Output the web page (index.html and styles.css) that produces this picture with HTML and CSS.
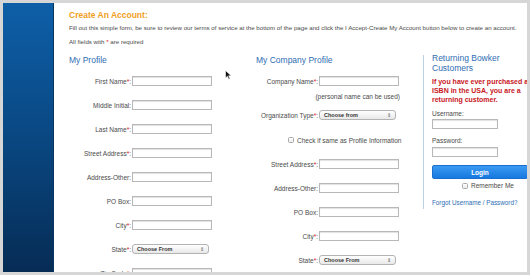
FILE: index.html
```html
<!DOCTYPE html>
<html lang="en">
<head>
    <meta charset="UTF-8">
    <meta name="viewport" content="width=device-width, initial-scale=1.0">
    <title>Create An Account</title>
    <link rel="stylesheet" href="styles.css">
</head>
<body>
    <div class="frame">
        <div class="sidebar"></div>
        <div class="main">
            <h1 class="page-title">Create An Account:</h1>
            <p class="intro">Fill out this simple form, be sure to review our terms of service at the bottom of the page and click the I Accept-Create My Account button below to create an account.</p>
            <p class="intro required-note">All fields with <span class="req">*</span> are required</p>

            <div class="columns">
                <div class="col profile">
                    <h2 class="col-title">My Profile</h2>
                    <div class="row"><label>First Name<span class="req">*</span>:</label><input type="text"></div>
                    <div class="row"><label>Middle Initial:</label><input type="text"></div>
                    <div class="row"><label>Last Name<span class="req">*</span>:</label><input type="text"></div>
                    <div class="row"><label>Street Address<span class="req">*</span>:</label><input type="text"></div>
                    <div class="row"><label>Address-Other:</label><input type="text"></div>
                    <div class="row"><label>PO Box:</label><input type="text"></div>
                    <div class="row"><label>City<span class="req">*</span>:</label><input type="text"></div>
                    <div class="row"><label>State<span class="req">*</span>:</label><span class="select">Choose From</span></div>
                    <div class="row"><label>Zip Code<span class="req">*</span>:</label><input type="text"></div>
                </div>

                <div class="col company">
                    <h2 class="col-title">My Company Profile</h2>
                    <div class="row"><label>Company Name<span class="req">*</span>:</label><input type="text"></div>
                    <p class="note">(personal name can be used)</p>
                    <div class="row"><label>Organization Type<span class="req">*</span>:</label><span class="select">Choose from</span></div>
                    <div class="row check-row"><input type="checkbox" class="check"><span>Check if same as Profile Information</span></div>
                    <div class="row"><label>Street Address<span class="req">*</span>:</label><input type="text"></div>
                    <div class="row"><label>Address-Other:</label><input type="text"></div>
                    <div class="row"><label>PO Box:</label><input type="text"></div>
                    <div class="row"><label>City<span class="req">*</span>:</label><input type="text"></div>
                    <div class="row"><label>State<span class="req">*</span>:</label><span class="select">Choose From</span></div>
                </div>

                <div class="col login">
                    <h2 class="col-title">Returning Bowker Customers</h2>
                    <p class="returning">If you have ever purchased an ISBN in the USA, you are a returning customer.</p>
                    <div class="field-label">Username:</div>
                    <input type="text" class="login-input">
                    <div class="field-label password">Password:</div>
                    <input type="password" class="login-input">
                    <button class="login-button">Login</button>
                    <div class="remember"><input type="checkbox" class="check"><span>Remember Me</span></div>
                    <a href="#" class="forgot">Forgot Username / Password?</a>
                </div>
            </div>
        </div>

        <!-- mouse pointer caught in the screenshot -->
        <svg class="cursor" width="7" height="10" viewBox="0 0 7 10">
            <path d="M0.5 0.5 L0.5 8 L2.4 6.3 L3.8 9.3 L5 8.8 L3.6 5.8 L6.2 5.8 Z" fill="#111" stroke="#fff" stroke-width="0.6"/>
        </svg>
    </div>
</body>
</html>
```
FILE: styles.css
```css
html, body {
    margin: 0;
    height: 275px;
}
body {
    background-color: #d6d6d6;
    padding: 3px;
    box-sizing: border-box;
    font-family: "Liberation Sans", Arial, sans-serif;
    color: #4a4a4a;
}
.frame {
    position: relative;
    display: flex;
    height: 269px;
    background-color: #fff;
    overflow: hidden;
}
.sidebar {
    flex: 0 0 50px;
    background: linear-gradient(#0e5fa8, #0a4a86 45%, #062c55);
    border-right: 1px solid #0a3560;
}
.main {
    flex: 1;
    min-width: 0;
    padding: 6px 0 0 15px;
}
.page-title {
    margin: 0;
    font-size: 8.5px;
    line-height: 12px;
    font-weight: bold;
    color: #f0a01e;
}
.intro {
    margin: 2px 0 0;
    font-size: 6.15px;
    line-height: 10px;
    white-space: nowrap;
}
.required-note {
    margin-top: 4px;
}
.req {
    color: #d8141c;
}
.columns {
    display: flex;
    margin-top: 8px;
}
.col {
    flex-shrink: 0;
}
.profile {
    width: 187px;
}
.company {
    width: 167px;
}
.login {
    width: 101px;
    align-self: flex-start;
    border-left: 1px solid #b9d0e6;
    padding: 0 0 1px 8px;
}
.col-title {
    margin: 0 0 4px;
    font-size: 8.5px;
    line-height: 10px;
    font-weight: normal;
    color: #2e6db3;
}
.login .col-title {
    margin-top: -2px;
}
.row {
    display: flex;
    align-items: center;
    height: 24px;
    font-size: 6.5px;
}
.row label {
    width: 62px;
    padding-right: 1px;
    text-align: right;
    white-space: nowrap;
}
input[type="text"], input[type="password"] {
    width: 80px;
    height: 10px;
    box-sizing: border-box;
    margin: 0;
    border: 1px solid #b8b8b8;
    box-shadow: inset 0 1px 1px rgba(0, 0, 0, 0.12);
    background-color: #fff;
}
.select {
    position: relative;
    width: 77px;
    height: 10px;
    box-sizing: border-box;
    padding-left: 4px;
    border: 1px solid #b3b3b3;
    border-radius: 3px;
    background: linear-gradient(#fff, #e8e8e8);
    font-size: 5.5px;
    line-height: 8px;
    font-weight: bold;
    color: #333;
}
.select::after {
    content: "\21D5";
    position: absolute;
    right: 4px;
    top: 0;
    font-size: 5px;
    font-weight: normal;
    color: #555;
}
.note {
    width: 144px;
    margin: -1px 0 1px;
    font-size: 6.5px;
    line-height: 10px;
    text-align: right;
}
.check-row {
    margin-top: 1px;
    padding-left: 32px;
}
.check {
    appearance: none;
    -webkit-appearance: none;
    width: 6px;
    height: 6px;
    margin: 0 3px 0 0;
    border: 1px solid #a8a8a8;
    border-radius: 1.5px;
    background: linear-gradient(#fff, #ececec);
    box-sizing: border-box;
}
.returning {
    margin: 3px 0 0;
    font-size: 7px;
    line-height: 9px;
    font-weight: bold;
    color: #c8161d;
}
.field-label {
    margin-top: 5px;
    font-size: 6.5px;
    line-height: 10px;
}
.field-label.password {
    margin-top: 7px;
}
.login-input {
    display: block;
    width: 66px !important;
}
.password + .login-input {
    margin-top: 1px;
}
.login-button {
    display: block;
    width: 96px;
    height: 14px;
    margin-top: 8px;
    padding: 0;
    border: 1px solid #1a6fcf;
    border-radius: 2px;
    background: linear-gradient(#3a9af2, #1778df);
    color: #fff;
    font-family: inherit;
    font-size: 6.5px;
    font-weight: bold;
}
.remember {
    display: flex;
    align-items: center;
    height: 9px;
    margin-top: 2px;
    padding-left: 30px;
    font-size: 6.5px;
}
.forgot {
    display: block;
    margin-top: 8px;
    font-size: 6.3px;
    line-height: 10px;
    color: #2e6db3;
    text-decoration: none;
    white-space: nowrap;
}
.cursor {
    position: absolute;
    left: 222px;
    top: 67px;
}
```
